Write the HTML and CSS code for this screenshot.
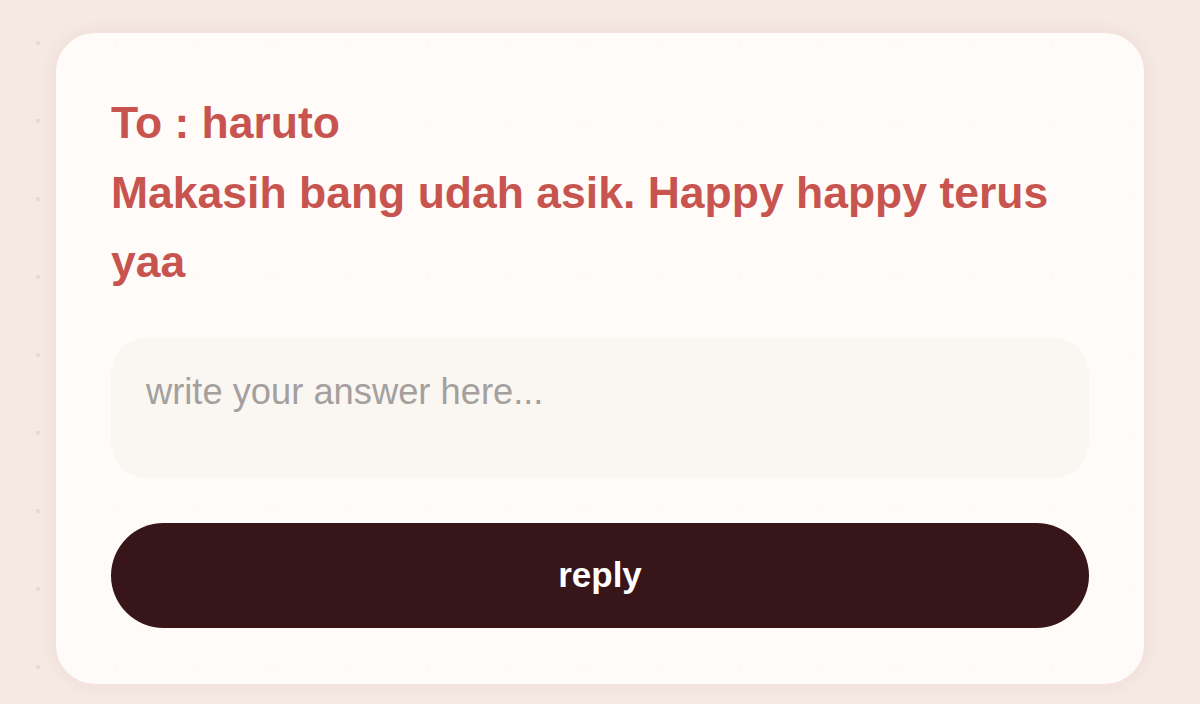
FILE: index.html
```html
<!DOCTYPE html>
<html lang="en">
<head>
  <meta charset="UTF-8" />
  <meta name="viewport" content="width=device-width, initial-scale=1.0" />
  <title>Reply</title>
  <link rel="stylesheet" href="styles.css">
</head>
<body>
  <div class="card">
    <div class="message">
      <div class="to">To : haruto</div>
      <div class="text">Makasih bang udah asik. Happy happy terus yaa</div>
    </div>
    <textarea class="answer" placeholder="write your answer here..."></textarea>
    <button class="reply-btn">reply</button>
  </div>
</body>
</html>
```

FILE: styles.css
```css
html {
  background-color: #f5e9e4;
}
body {
  font-family: "Liberation Sans", Arial, sans-serif;
  margin: 0;
  padding: 30px 53px;
  min-height: 100vh;
  box-sizing: border-box;
  background-color: #f5e9e4;
  background-image: radial-gradient(circle, #ebd7d4 2px, transparent 2.6px);
  background-size: 78px 78px;
  background-position: -1px 4px;
}
.card {
  box-sizing: border-box;
  width: 1094px;
  padding: 55px 55px 56px;
  background-color: rgba(255, 252, 250, 0.93);
  border: 3px solid #f4e2df;
  border-radius: 42px;
  box-shadow: 0 0 12px rgba(220, 180, 170, 0.22);
  display: flex;
  flex-direction: column;
}
.message {
  color: #c85450;
  font-weight: bold;
  font-size: 44.5px;
  line-height: 69.5px;
}
.answer {
  display: block;
  box-sizing: border-box;
  width: 100%;
  height: 140px;
  margin-top: 41px;
  padding: 33px 35px;
  border: none;
  border-radius: 36px;
  background-color: #faf6f2;
  font-family: "Liberation Sans", Arial, sans-serif;
  font-size: 36.3px;
  color: #444;
  resize: none;
  outline: none;
}
.answer::placeholder {
  color: #a3a09e;
}
.reply-btn {
  margin-top: 45px;
  height: 105px;
  width: 100%;
  border: none;
  border-radius: 53px;
  background-color: #371519;
  color: #fff;
  font-family: "Liberation Sans", Arial, sans-serif;
  font-weight: bold;
  font-size: 35px;
  cursor: pointer;
}
```
